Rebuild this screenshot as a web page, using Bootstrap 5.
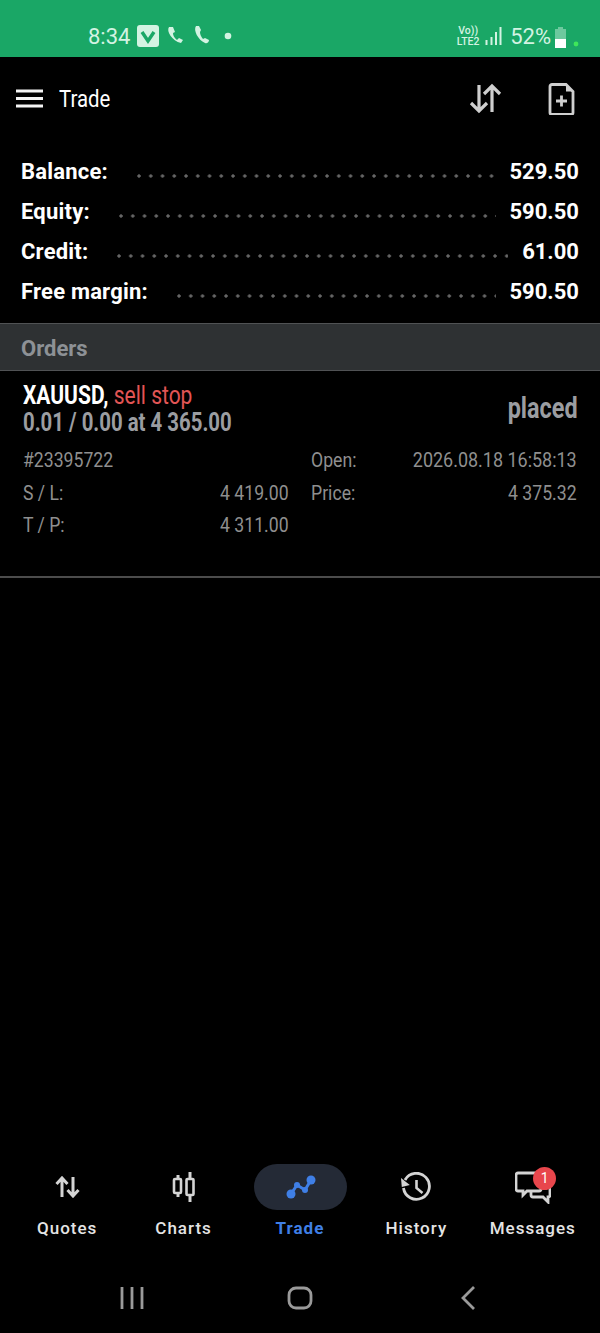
<!DOCTYPE html>
<html lang="en">
<head>
    <meta charset="UTF-8">
    <meta name="viewport" content="width=device-width, initial-scale=1.0">
    <title>Trade</title>
    <link rel="stylesheet" href="https://cdn.jsdelivr.net/npm/bootstrap@5.3.0/dist/css/bootstrap.min.css">
    <style>
        body {
            background: #000;
            font-family: Roboto, "Liberation Sans", sans-serif;
            color: #fff;
        }
        .phone { width: 600px; height: 1333px; }
        .status-bar {
            height: 57px;
            flex: none;
            background: #1aa766;
            color: #d3f3e2;
            padding: 15px 20px 0 88px;
            font-size: 22px;
            line-height: 44px;
        }
        .status-time { width: 49px; }
        .status-glyph { margin-top: 10px; }
        .volte { font-size: 10.5px; line-height: 10.5px; font-weight: 500; text-align: center; width: 24px; padding-top: 11px; }
        .top-bar { height: 83px; flex: none; padding: 0 25px 0 16px; }
        .screen-title { font-size: 24px; margin-left: 16px; line-height: 1; transform: scaleX(.85); transform-origin: left; }
        .summary { height: 183px; flex: none; padding: 15px 21px 0; }
        .sum-row { height: 40px; font-size: 22px; font-weight: 700; line-height: 33px; }
        .sum-label { letter-spacing: .2px; }
        .leader {
            height: 4px;
            margin: 19px 14px 0 29px;
            background: radial-gradient(circle at 2px 2px, #666 1.4px, transparent 1.9px) 0 0 / 11.75px 4px repeat-x;
        }
        .section-bar {
            height: 48px;
            flex: none;
            background: #2e3133;
            border-top: 1px solid #505254;
            border-bottom: 1px solid #505254;
            padding-left: 21px;
            font-size: 22px;
            font-weight: 700;
            color: #8d9196;
            line-height: 49px;
        }
        .order-item { height: 207px; flex: none; border-bottom: 2px solid #4c4c4c; padding: 11px 23px 0; }
        .squeeze { display: inline-block; white-space: nowrap; transform: scaleX(.84); transform-origin: left; }
        .squeeze-end { transform-origin: right; }
        .squeeze-long { transform: scaleX(.855); }
        .order-title { font-size: 25px; line-height: 27px; font-weight: 700; }
        .title-line { transform: scaleX(.84); }
        .sell-label { color: #e25555; font-weight: 400; }
        .order-sub { color: #9b9da1; transform: scaleX(.815); }
        .order-state { font-size: 30px; font-weight: 700; color: #9b9da1; line-height: 1; margin: -3px -1px 0 0; transform: scaleX(.78); }
        .order-grid { margin-top: 8px; font-size: 21px; color: #8f8f8f; display: grid; grid-template-columns: 266px 266px; column-gap: 22px; }
        .grid-cell { height: 32.5px; line-height: 32px; }
        .tab-bar { height: 99px; flex: none; padding-left: 3px; padding-right: 3px; }
        .tab-item { width: 116.4px; font-size: 17px; font-weight: 500; letter-spacing: 1px; color: #e4e4e4; line-height: 20px; }
        .tab-icon { height: 46px; width: 93px; margin-bottom: 8px; position: relative; }
        .tab-on { background: #242a36; border-radius: 23px; margin-left: 2px; }
        .tab-on-text { color: #3f7fe6; font-weight: 700; }
        .msg-count {
            position: absolute;
            top: 3px;
            left: 47px;
            width: 23px;
            height: 23px;
            border-radius: 50%;
            background: #e8464c;
            color: #fff;
            font-size: 14px;
            font-weight: 400;
            letter-spacing: 0;
            line-height: 23px;
            text-align: center;
        }
        .system-bar { height: 70px; flex: none; }
        .system-slot { width: 168px; }
    </style>
</head>
<body class="m-0">
    <div class="phone d-flex flex-column">
        <div class="status-bar d-flex">
            <span class="status-time">8:34</span>
            <svg class="status-glyph" width="22" height="22" viewBox="0 0 22 22"><rect width="22" height="22" rx="3" fill="#d3f3e2"/><path d="M5 7l6 9 6-9" fill="none" stroke="#1aa766" stroke-width="3.4"/></svg>
            <svg class="status-glyph" width="18" height="20" viewBox="0 0 18 20" style="margin-left:7px"><path d="M3 2c-3 4 3 14 12 16l2-3-4-2-2 2C8 13 7 10 7 8l2-1-2-5z" fill="#d3f3e2"/></svg>
            <svg class="status-glyph ms-2" width="20" height="20" viewBox="0 0 18 20"><path d="M3 1C0 5 5 15 12 18c2 1 4-1 4-3l-4-2-2 1C8 12 7 9 7 7l1-2-2-4z" fill="#d3f3e2"/></svg>
            <svg class="status-glyph" width="8" height="22" viewBox="0 0 8 22" style="margin-left:12px"><circle cx="4" cy="11" r="3.3" fill="#d3f3e2"/></svg>
            <div class="ms-auto volte"><div>Vo))</div><div>LTE2</div></div>
            <svg class="status-glyph" width="17" height="22" viewBox="0 0 17 22" style="margin-left:5px"><path d="M1.500 15v5M6.500 12v8M11 7v13M15.500 2v18" stroke="#d3f3e2" stroke-width="2" fill="none"/></svg>
            <span class="ms-2">52%</span>
            <svg class="status-glyph" width="13" height="24" viewBox="0 0 13 24" style="margin-left:3px"><path d="M4 2h5v2h3v19H1V4h3z" fill="#d3f3e2" opacity=".45"/><path d="M1 14h11v9H1z" fill="#fff"/></svg>
            <svg width="8" height="44" viewBox="0 0 8 44" style="margin-left:5px"><circle cx="4" cy="29" r="2.400" fill="#3fe65a"/></svg>
        </div>

        <div class="top-bar d-flex align-items-center">
            <svg width="27" height="19" viewBox="0 0 27 19"><path d="M0 2h27M0 9.500h27M0 17h27" stroke="#f4f4f4" stroke-width="2.800"/></svg>
            <span class="screen-title">Trade</span>
            <svg class="ms-auto" width="33" height="31" viewBox="0 0 33 31" style="margin-right:46px"><path d="M10 2v26M2 20l8 8 8-8M23 29V3M15 11l8-8 8 8" fill="none" stroke="#cfcfcf" stroke-width="3.200"/></svg>
            <svg width="27" height="32" viewBox="0 0 27 32"><path d="M2 3.500a2 2 0 0 1 2-2h14l7 7v21a2 2 0 0 1-2 2H4a2 2 0 0 1-2-2z" fill="none" stroke="#cfcfcf" stroke-width="2.800"/><path d="M18 1.500v7h7z" fill="#cfcfcf"/><path d="M8 18h11M13.500 12.500v11" stroke="#cfcfcf" stroke-width="2.800"/></svg>
        </div>

        <div class="summary">
            <div class="sum-row d-flex"><span class="sum-label">Balance:</span><span class="leader flex-grow-1"></span><span>529.50</span></div>
            <div class="sum-row d-flex"><span class="sum-label">Equity:</span><span class="leader flex-grow-1"></span><span>590.50</span></div>
            <div class="sum-row d-flex"><span class="sum-label">Credit:</span><span class="leader flex-grow-1"></span><span>61.00</span></div>
            <div class="sum-row d-flex"><span class="sum-label">Free margin:</span><span class="leader flex-grow-1"></span><span>590.50</span></div>
        </div>

        <div class="section-bar">Orders</div>

        <div class="order-item">
            <div class="d-flex justify-content-between align-items-center">
                <div class="order-title">
                    <div><span class="squeeze title-line">XAUUSD, <span class="sell-label">sell stop</span></span></div>
                    <div><span class="squeeze order-sub">0.01 / 0.00 at 4 365.00</span></div>
                </div>
                <span class="order-state squeeze squeeze-end">placed</span>
            </div>
            <div class="order-grid">
                <div class="grid-cell"><span class="squeeze">#23395722</span></div>
                <div class="grid-cell d-flex justify-content-between"><span class="squeeze">Open:</span><span class="squeeze squeeze-end squeeze-long">2026.08.18 16:58:13</span></div>
                <div class="grid-cell d-flex justify-content-between"><span class="squeeze">S / L:</span><span class="squeeze squeeze-end">4 419.00</span></div>
                <div class="grid-cell d-flex justify-content-between"><span class="squeeze">Price:</span><span class="squeeze squeeze-end">4 375.32</span></div>
                <div class="grid-cell d-flex justify-content-between"><span class="squeeze">T / P:</span><span class="squeeze squeeze-end">4 311.00</span></div>
            </div>
        </div>

        <div class="flex-grow-1"></div>

        <div class="tab-bar d-flex justify-content-center">
            <div class="tab-item d-flex flex-column align-items-center">
                <div class="tab-icon d-flex align-items-center justify-content-center">
                    <svg width="25" height="22" viewBox="0 0 25 22"><path d="M7 21V2M1.500 8l5.500-6 5.500 6M18 1v19M12.500 14l5.500 6 5.500-6" fill="none" stroke="#d4d4d4" stroke-width="3"/></svg>
                </div>Quotes
            </div>
            <div class="tab-item d-flex flex-column align-items-center">
                <div class="tab-icon d-flex align-items-center justify-content-center">
                    <svg width="24" height="30" viewBox="0 0 24 30"><path d="M6 3v4M6 21v4M18 0v7M18 23v7" stroke="#d4d4d4" stroke-width="3"/><rect x="2" y="7" width="7" height="14" rx="1" fill="none" stroke="#d4d4d4" stroke-width="2.600"/><rect x="14.500" y="7" width="7" height="16" rx="1" fill="none" stroke="#d4d4d4" stroke-width="2.600"/></svg>
                </div>Charts
            </div>
            <div class="tab-item tab-on-text d-flex flex-column align-items-center">
                <div class="tab-icon tab-on d-flex align-items-center justify-content-center">
                    <svg width="30" height="24" viewBox="0 0 30 24"><path d="M5 19l6-9 8 5 6-10" fill="none" stroke="#3f7fe6" stroke-width="3"/><circle cx="5" cy="19" r="4.500" fill="#3f7fe6"/><circle cx="11" cy="10" r="3" fill="#3f7fe6"/><circle cx="19" cy="15" r="3" fill="#3f7fe6"/><circle cx="25" cy="5" r="4.500" fill="#3f7fe6"/></svg>
                </div>Trade
            </div>
            <div class="tab-item d-flex flex-column align-items-center">
                <div class="tab-icon d-flex align-items-center justify-content-center">
                    <svg width="32" height="30" viewBox="0 0 32 30"><path d="M5 8a13 13 0 1 1-1.500 8" fill="none" stroke="#d4d4d4" stroke-width="2.800"/><path d="M1 6l.8 9 8-2z" fill="#d4d4d4"/><path d="M16.500 8v8l6 5" fill="none" stroke="#d4d4d4" stroke-width="2.600"/></svg>
                </div>History
            </div>
            <div class="tab-item d-flex flex-column align-items-center">
                <div class="tab-icon d-flex align-items-center justify-content-center">
                    <svg width="36" height="33" viewBox="0 0 36 33"><path d="M3 2h21a2 2 0 0 1 2 2v14a2 2 0 0 1-2 2h-12l-4 4v-4H3a2 2 0 0 1-2-2V4a2 2 0 0 1 2-2z" fill="none" stroke="#d4d4d4" stroke-width="2.800"/><path d="M27 9h6a2 2 0 0 1 2 2v13a2 2 0 0 1-2 2v5l-5-5H18a2 2 0 0 1-2-2v-3" fill="none" stroke="#d4d4d4" stroke-width="2.800"/></svg>
                    <span class="msg-count">1</span>
                </div>Messages
            </div>
        </div>

        <div class="system-bar d-flex align-items-center justify-content-center">
            <div class="system-slot text-center"><svg width="24" height="24" viewBox="0 0 24 24"><path d="M2 1v22M12 1v22M22 1v22" stroke="#9a9a9a" stroke-width="2.800"/></svg></div>
            <div class="system-slot text-center"><svg width="26" height="24" viewBox="0 0 26 24"><rect x="2" y="2" width="22" height="20" rx="7" fill="none" stroke="#9a9a9a" stroke-width="2.800"/></svg></div>
            <div class="system-slot text-center"><svg width="16" height="24" viewBox="0 0 16 24"><path d="M14 1L3 12l11 11" fill="none" stroke="#9a9a9a" stroke-width="2.800"/></svg></div>
        </div>
    </div>
    <script src="https://cdn.jsdelivr.net/npm/bootstrap@5.3.0/dist/js/bootstrap.bundle.min.js"></script>
</body>
</html>
